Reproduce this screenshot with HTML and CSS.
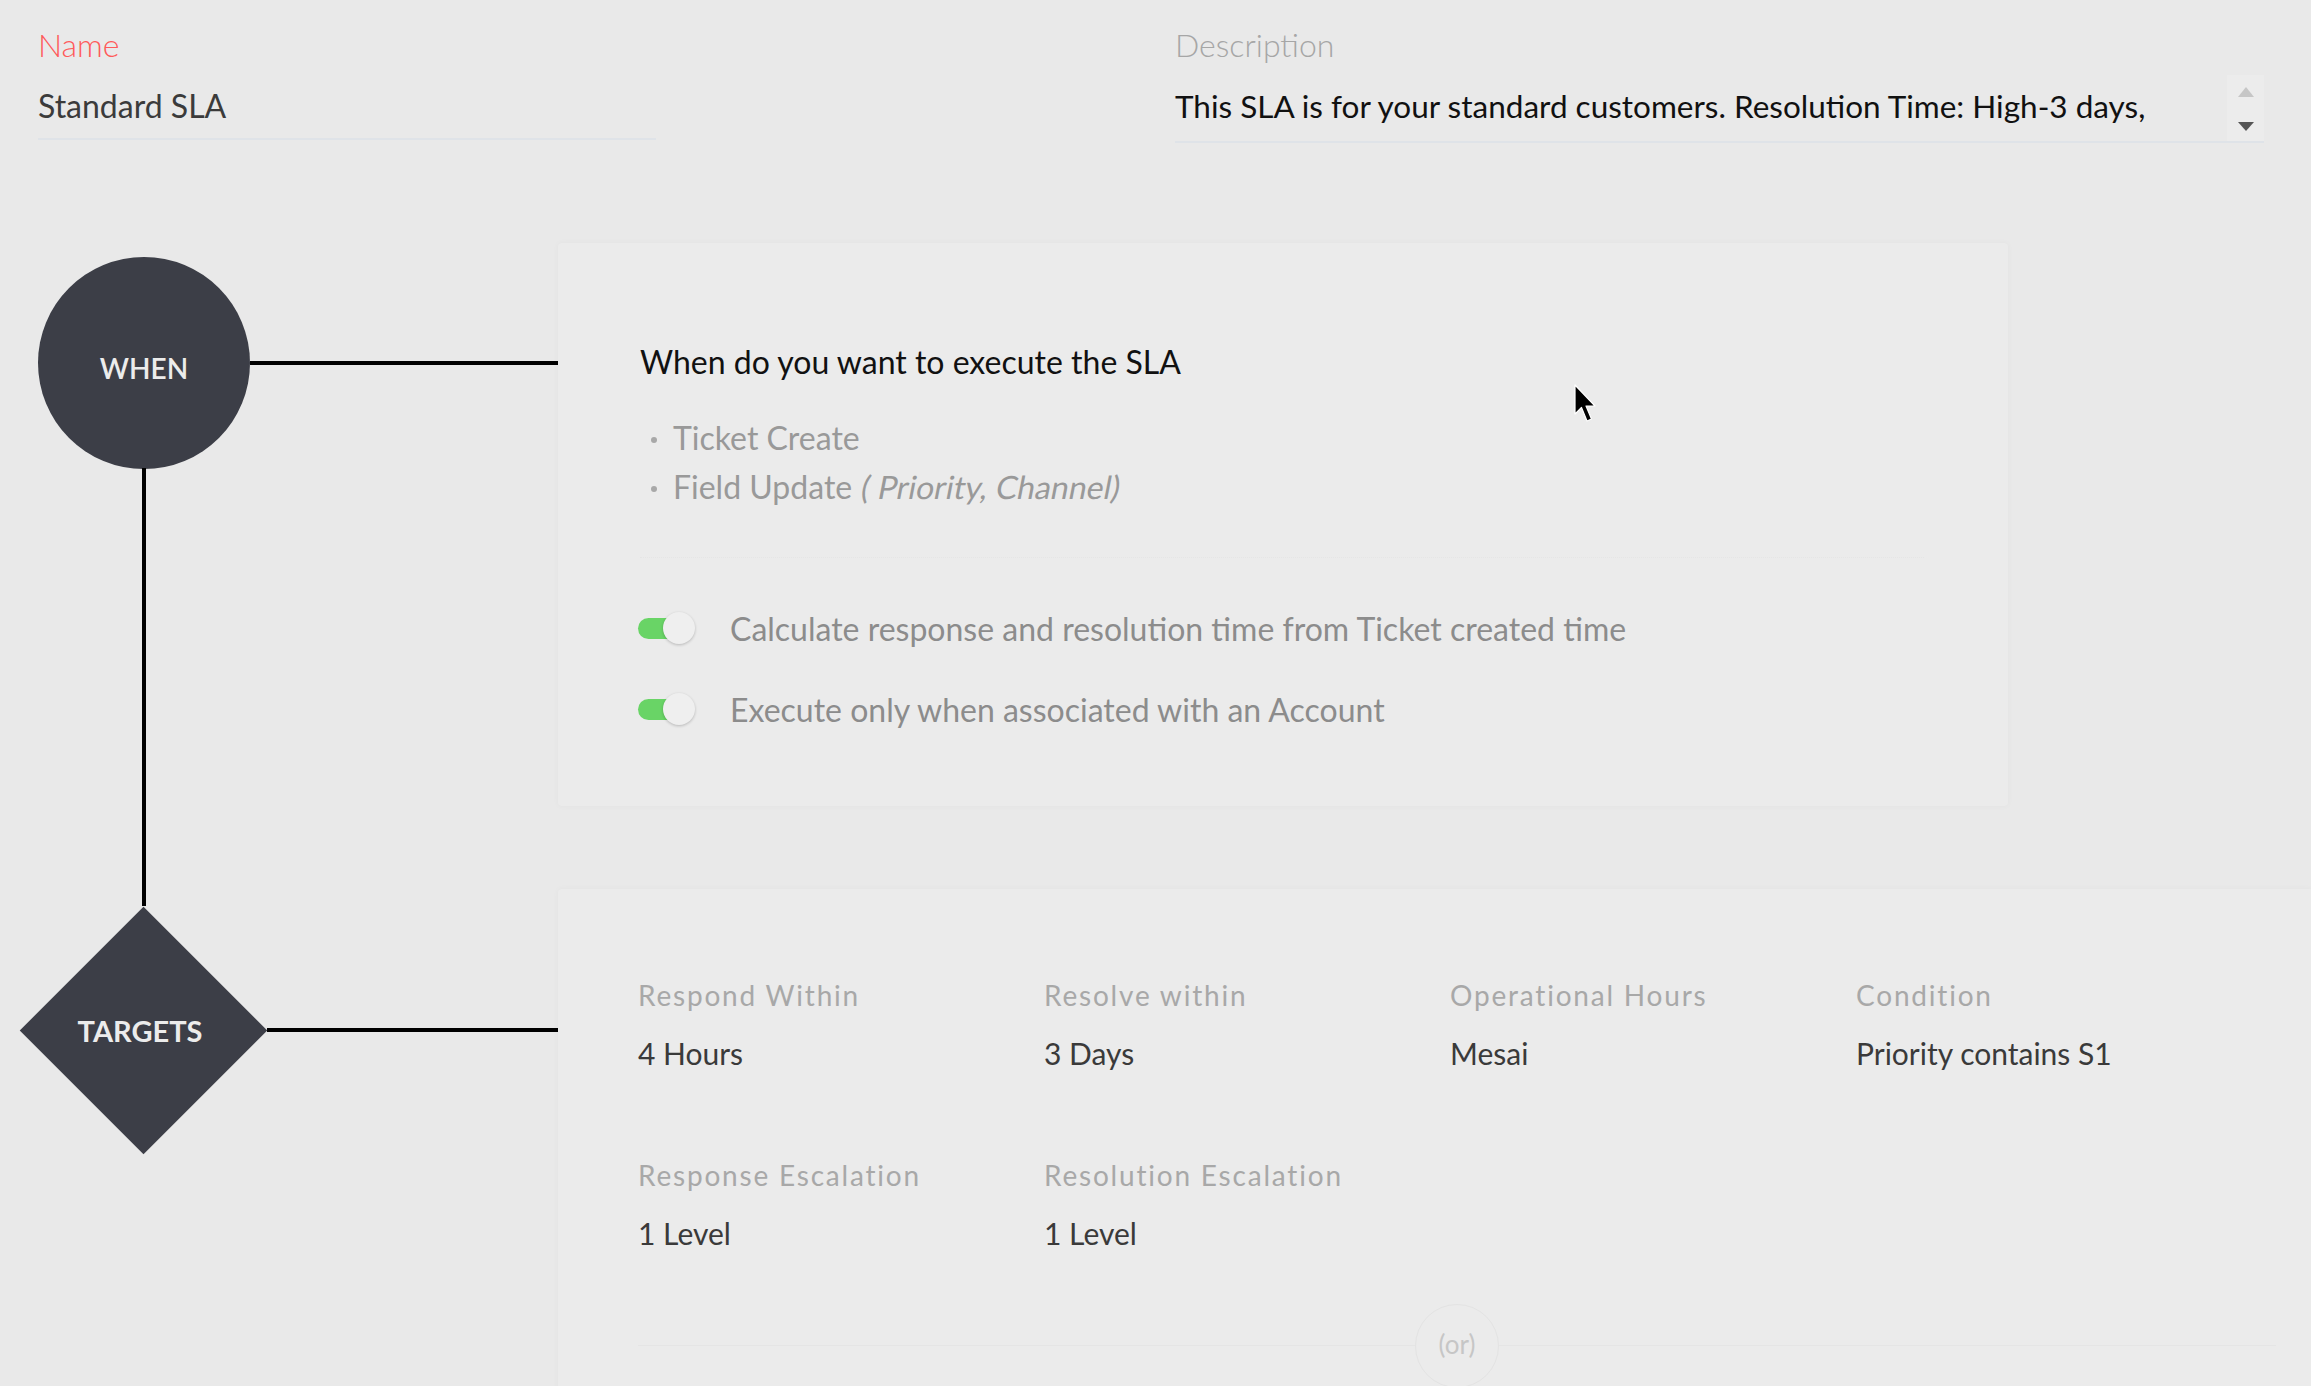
FILE: index.html
```html
<!DOCTYPE html>
<html lang="en">
<head>
<meta charset="utf-8">
<title>Standard SLA</title>
<link rel="stylesheet" href="styles.css">
</head>
<body>
<div class="page">
  <div class="header">
    <div class="field field-name">
      <div class="field-label label-required">Name</div>
      <div class="field-value name-value">Standard SLA</div>
    </div>
    <div class="field field-desc">
      <div class="field-label">Description</div>
      <div class="field-value desc-value">
        <span class="desc-text">This SLA is for your standard customers. Resolution Time: High-3 days,</span>
        <span class="spinner"><span class="arrow-up"></span><span class="arrow-down"></span></span>
      </div>
    </div>
  </div>

  <div class="flow">
    <div class="step step-when">
      <div class="node-col node-col-when">
        <div class="node-circle">WHEN</div>
        <div class="connector"></div>
      </div>
      <div class="card card-when">
        <div class="card-title">When do you want to execute the SLA</div>
        <ul class="trigger-list">
          <li>Ticket Create</li>
          <li>Field Update <em class="oblique">( Priority, Channel)</em></li>
        </ul>
        <div class="separator"></div>
        <div class="toggle-list">
          <div class="toggle-row">
            <span class="toggle"><span class="toggle-knob"></span></span>
            <span class="toggle-text">Calculate response and resolution time from Ticket created time</span>
          </div>
          <div class="toggle-row">
            <span class="toggle"><span class="toggle-knob"></span></span>
            <span class="toggle-text">Execute only when associated with an Account</span>
          </div>
        </div>
      </div>
    </div>

    <div class="step step-targets">
      <div class="node-col node-col-targets">
        <div class="node-diamond">
          <span class="diamond-shape"></span>
          <span class="diamond-text">TARGETS</span>
        </div>
        <div class="connector"></div>
      </div>
      <div class="card card-targets">
        <div class="target-grid">
          <div class="target-item"><div class="target-label">Respond Within</div><div class="target-value">4 Hours</div></div>
          <div class="target-item"><div class="target-label">Resolve within</div><div class="target-value">3 Days</div></div>
          <div class="target-item"><div class="target-label">Operational Hours</div><div class="target-value">Mesai</div></div>
          <div class="target-item"><div class="target-label">Condition</div><div class="target-value">Priority contains S1</div></div>
          <div class="target-item"><div class="target-label">Response Escalation</div><div class="target-value">1 Level</div></div>
          <div class="target-item"><div class="target-label">Resolution Escalation</div><div class="target-value">1 Level</div></div>
        </div>
        <div class="or-row">
          <span class="or-badge">(or)</span>
        </div>
      </div>
    </div>
  </div>
</div>
<svg class="cursor" width="24" height="40" viewBox="0 0 24 40" aria-hidden="true">
  <path d="M1 1 L1 30 L7.5 23.5 L13 37 L17.5 35 L12 22 L21 22 Z" fill="#000" stroke="#fff" stroke-width="1.2" stroke-linejoin="round"/>
</svg>
</body>
</html>
```

FILE: styles.css
```css
html, body {
  margin: 0;
  padding: 0;
}
body {
  width: 2311px;
  height: 1386px;
  overflow: hidden;
  background: #e9e9e9;
  font-family: "Lato", "Open Sans", "Liberation Sans", sans-serif;
  position: relative;
}
.page {
  width: 2311px;
}

/* ---------- header fields ---------- */
.header {
  display: flex;
  padding: 27px 0 0 38px;
  gap: 519px;
}
.field {
  display: flex;
  flex-direction: column;
}
.field-name { width: 618px; }
.field-desc { width: 1089px; }
.field-label {
  font-size: 32px;
  line-height: 36px;
  font-weight: 300;
  color: #a6a6a6;
}
.label-required { color: #ff5a5a; }
.field-value {
  margin-top: 23px;
  font-size: 32px;
  line-height: 40px;
  color: #3b3b3b;
  border-bottom: 2px solid #dfe3e8;
}
.name-value { padding-bottom: 12px; }
.desc-value {
  display: flex;
  padding-bottom: 15px;
  color: #111;
  font-size: 31.5px;
}
.desc-text { white-space: nowrap; }
.spinner {
  margin-left: auto;
  margin-top: -11px;
  margin-bottom: -15px;
  width: 37px;
  background: #ececec;
  display: flex;
  flex-direction: column;
  align-items: center;
  justify-content: space-between;
  padding: 12px 0 10px;
  box-sizing: border-box;
}
.arrow-up {
  width: 0; height: 0;
  border-left: 8px solid transparent;
  border-right: 8px solid transparent;
  border-bottom: 10px solid #c6c6c6;
}
.arrow-down {
  width: 0; height: 0;
  border-left: 8px solid transparent;
  border-right: 8px solid transparent;
  border-top: 9px solid #555;
}

/* ---------- flow diagram ---------- */
.flow {
  margin-top: 100px;
  display: flex;
  flex-direction: column;
  gap: 83px;
}
.step {
  display: flex;
  align-items: flex-start;
}
.node-col {
  width: 558px;
  flex: none;
  display: flex;
  align-items: center;
}
.node-col-when { padding-top: 14px; }
.node-col-targets { padding-top: 17px; }
.connector {
  flex: 1;
  height: 4px;
  background: #000;
}
.node-circle {
  position: relative;
  margin-left: 38px;
  width: 212px;
  height: 212px;
  box-sizing: border-box;
  padding-top: 10px;
  border-radius: 50%;
  background: #3c3e47;
  color: #ececec;
  display: flex;
  align-items: center;
  justify-content: center;
  font-size: 28px;
  font-weight: 600;
}
.node-circle::after {
  content: "";
  position: absolute;
  left: 104px;
  top: 211px;
  width: 4px;
  height: 438px;
  background: #000;
}
.node-diamond {
  margin-left: 19px;
  width: 248px;
  height: 248px;
  display: grid;
  place-items: center;
}
.diamond-shape {
  grid-area: 1 / 1;
  width: 175px;
  height: 175px;
  background: #3c3e47;
  transform: rotate(45deg);
}
.diamond-text {
  grid-area: 1 / 1;
  color: #ececec;
  font-size: 29px;
  font-weight: 700;
  position: relative;
  margin-left: -6px;
}

/* ---------- cards ---------- */
.card {
  background: #ebebeb;
  box-shadow: 0 0 6px rgba(0, 0, 0, 0.035);
  border-radius: 4px;
  box-sizing: border-box;
}
.card-when {
  width: 1450px;
  padding: 101px 84px 72px 82px;
}
.card-title {
  font-size: 32px;
  line-height: 36px;
  color: #111;
}
.trigger-list {
  list-style: none;
  margin: 33px 0 0;
  padding: 0;
}
.trigger-list li {
  display: flex;
  align-items: center;
  font-size: 32px;
  line-height: 49px;
  color: #999;
  white-space: pre;
}
.trigger-list li::before {
  content: "";
  width: 6px;
  height: 6px;
  border-radius: 50%;
  background: #a8a8a8;
  margin: 4px 16px 0 11px;
  flex: none;
}
.oblique {
  font-style: normal;
  display: inline-block;
  transform: skewX(-11deg);
  transform-origin: 0 70%;
}
.separator {
  margin-top: 46px;
  border-top: 1px dotted #e5e5e5;
}
.toggle-list {
  margin-top: 45px;
  display: flex;
  flex-direction: column;
  gap: 31px;
}
.toggle-row {
  display: flex;
  align-items: center;
  height: 50px;
}
.toggle {
  position: relative;
  width: 57px;
  height: 21px;
  flex: none;
  margin-left: -2px;
}
.toggle::before {
  content: "";
  position: absolute;
  left: 0;
  top: 0;
  width: 50px;
  height: 21px;
  border-radius: 11px;
  background: #69d466;
}
.toggle-knob {
  position: absolute;
  left: 25px;
  top: -6px;
  width: 32px;
  height: 32px;
  border-radius: 50%;
  background: #efefef;
  box-shadow: 0 1px 3px rgba(0, 0, 0, 0.22);
}
.toggle-text {
  margin-left: 35px;
  font-size: 32px;
  color: #8c8c8c;
  white-space: nowrap;
}

.card-targets {
  flex: 1;
  padding: 89px 0 120px 80px;
  border-radius: 4px 0 0 0;
}
.target-grid {
  display: grid;
  grid-template-columns: repeat(4, 406px);
  row-gap: 87px;
}
.target-label {
  font-size: 28px;
  line-height: 34px;
  letter-spacing: 1.8px;
  color: #a8a8a8;
}
.target-value {
  margin-top: 23px;
  font-size: 30px;
  line-height: 36px;
  color: #3a3a3a;
}
.or-row {
  margin-top: 94px;
  width: 1638px;
  height: 1px;
  background: #e5e5e5;
  display: flex;
  justify-content: center;
  align-items: center;
}
.or-badge {
  flex: none;
  width: 84px;
  height: 84px;
  border-radius: 50%;
  background: #ebebeb;
  border: 1px solid #e3e3e3;
  box-sizing: border-box;
  display: flex;
  align-items: center;
  justify-content: center;
  padding-bottom: 4px;
  font-size: 26px;
  color: #c6c6c6;
}

/* ---------- cursor overlay ---------- */
.cursor {
  position: absolute;
  left: 1574px;
  top: 384px;
}
```
